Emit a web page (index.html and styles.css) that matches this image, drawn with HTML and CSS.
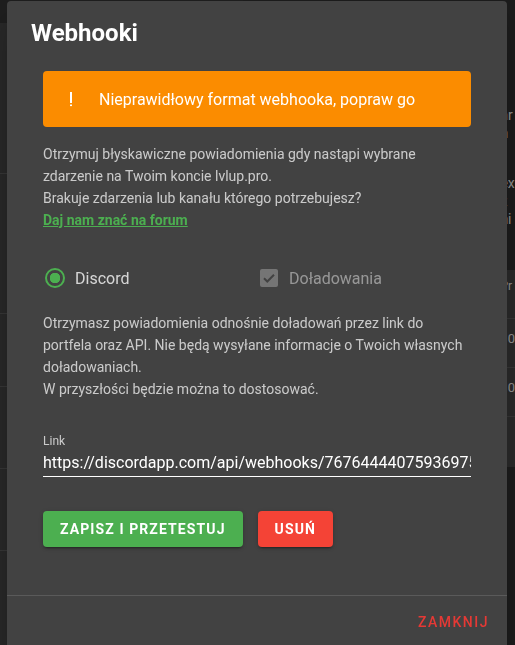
FILE: index.html
```html
<!DOCTYPE html>
<html>
  <head>
    <meta charset="utf-8" />
    <title>Webhooki</title>
    <link rel="stylesheet" href="styles.css">
  </head>

  <body>
    <!-- page behind the dialog -->
    <div class="page">
      <div class="page-side">
        <div class="side-top"></div>
        <div class="side-row side-row--a"></div>
        <div class="side-row side-row--b"></div>
        <div class="side-row side-row--c"></div>
        <div class="side-row side-row--d"></div>
        <div class="side-row side-row--e"></div>
      </div>
      <div class="page-main">
        <div class="main-text">
          <p class="frag frag--first">ar</p>
          <p class="frag">n</p>
          <p class="frag frag--gap">ex</p>
          <p class="frag">z</p>
          <p class="frag">ni</p>
        </div>
        <div class="main-table">
          <div class="main-table__head">Pr</div>
          <div class="main-table__row">10</div>
          <div class="main-table__row">10</div>
        </div>
      </div>
    </div>

    <div class="overlay"></div>

    <div class="dialog">
      <h2 class="dialog-title">Webhooki</h2>

      <div class="dialog-body">
        <div class="alert">
          <svg class="alert-icon" width="24" height="24" viewBox="0 0 24 24">
            <rect x="11" y="5" width="2" height="11" fill="#fff" />
            <rect x="11" y="17.5" width="2" height="1.6" fill="#fff" />
          </svg>
          <span>Nieprawidłowy format webhooka, popraw go</span>
        </div>

        <p class="text">
          Otrzymuj błyskawiczne powiadomienia gdy nastąpi wybrane zdarzenie na
          Twoim koncie lvlup.pro.<br />
          Brakuje zdarzenia lub kanału którego potrzebujesz?<br />
          <a class="forum-link" href="#">Daj nam znać na forum</a>
        </p>

        <div class="choices">
          <label class="choice">
            <span class="radio"><span class="radio-dot"></span></span>
            <span class="choice-label">Discord</span>
          </label>
          <label class="choice choice--disabled">
            <span class="checkbox">
              <svg width="18" height="18" viewBox="0 0 18 18">
                <path d="M4 9.2l3.3 3.3L14 5.8" fill="none" stroke="#424242" stroke-width="2" />
              </svg>
            </span>
            <span class="choice-label">Doładowania</span>
          </label>
        </div>

        <p class="text text--info">
          Otrzymasz powiadomienia odnośnie doładowań przez link do portfela oraz
          API. Nie będą wysyłane informacje o Twoich własnych doładowaniach.<br />
          W przyszłości będzie można to dostosować.
        </p>

        <div class="field">
          <label class="field-label" for="link">Link</label>
          <input
            id="link"
            class="field-input"
            value="https://discordapp.com/api/webhooks/767644440759369759/abc"
            autocomplete="off"
          />
        </div>

        <div class="buttons">
          <button class="btn btn--green">Zapisz i przetestuj</button>
          <button class="btn btn--red">Usuń</button>
        </div>
      </div>

      <div class="dialog-actions">
        <button class="btn-text">Zamknij</button>
      </div>
    </div>
  </body>
</html>
```

FILE: styles.css
```css
html {
  font-family: Roboto, "Liberation Sans", Arial, sans-serif;
}

body {
  margin: 0;
  background: #1e1e1e;
  height: 645px;
  overflow: hidden;
}

/* page behind */
.page {
  display: flex;
  height: 645px;
}
.page-side {
  width: 250px;
  background: #2b2b2b;
}
.side-top {
  height: 23px;
  background: #202020;
}
.side-row {
  border-bottom: 1px solid #3a3a3a;
}
.side-row--a { height: 150px; }
.side-row--b { height: 139px; }
.side-row--c { height: 72px; }
.side-row--d { height: 81px; }
.side-row--e { height: 81px; }

.page-main {
  flex: 1;
  background: #1e1e1e;
  color: #9a9a9a;
  font-size: 14px;
  padding-left: 257px;
}
.main-text {
  height: 270px;
}
.frag {
  margin: 0;
  line-height: 18px;
}
.frag--first {
  padding-top: 106px;
}
.frag--gap {
  margin-top: 32px;
}
.main-table {
  background: #2d2d2d;
  height: 197px;
  font-size: 13px;
}
.main-table__head {
  height: 48px;
  line-height: 32px;
  font-size: 12px;
  border-bottom: 1px solid #3a3a3a;
}
.main-table__row {
  height: 48px;
  line-height: 40px;
  border-bottom: 1px solid #3a3a3a;
}

.overlay {
  position: fixed;
  inset: 0;
  background: rgba(0, 0, 0, 0.08);
}

/* dialog */
.dialog {
  position: fixed;
  top: 1px;
  left: 7px;
  width: 500px;
  background: #424242;
  border-radius: 4px 4px 0 0;
  box-shadow: 0 11px 15px -7px rgba(0, 0, 0, 0.2), 0 24px 38px 3px rgba(0, 0, 0, 0.14);
}

.dialog-title {
  margin: 0;
  padding: 16px 24px 0;
  font-size: 24px;
  line-height: 32px;
  font-weight: 700;
  color: #fff;
}

.dialog-body {
  padding: 22px 36px 48px;
}

.alert {
  display: flex;
  align-items: center;
  height: 56px;
  box-sizing: border-box;
  padding: 0 16px;
  background: #fb8c00;
  border-radius: 4px;
  color: #fff;
  font-size: 16px;
}
.alert-icon {
  margin-right: 16px;
  flex: none;
}

.text {
  margin: 16px 0 0;
  font-size: 14px;
  line-height: 22px;
  color: rgba(255, 255, 255, 0.72);
}
.text--info {
  margin-top: 22px;
}

.forum-link {
  color: #4caf50;
  font-weight: 700;
  text-decoration: underline;
}

.choices {
  display: grid;
  grid-template-columns: 1fr 1fr;
  margin-top: 35px;
}
.choice {
  display: flex;
  align-items: center;
  gap: 8px;
  height: 24px;
  font-size: 16px;
  color: rgba(255, 255, 255, 0.78);
}
.choice--disabled {
  color: rgba(255, 255, 255, 0.45);
}

.radio {
  width: 24px;
  height: 24px;
  display: flex;
  align-items: center;
  justify-content: center;
}
.radio-dot {
  width: 16px;
  height: 16px;
  border: 2px solid #4caf50;
  border-radius: 50%;
  box-sizing: content-box;
  background: radial-gradient(circle, #4caf50 0 5px, transparent 5.5px);
}

.checkbox {
  width: 24px;
  height: 24px;
  display: flex;
  align-items: center;
  justify-content: center;
}
.checkbox svg {
  background: #757575;
  border-radius: 2px;
}

.field {
  margin-top: 33px;
}
.field-label {
  display: block;
  font-size: 12px;
  line-height: 16px;
  color: rgba(255, 255, 255, 0.72);
}
.field-input {
  display: block;
  width: 100%;
  box-sizing: border-box;
  height: 28px;
  padding: 0 0 1px;
  margin: 0;
  border: 0;
  border-bottom: 1px solid #fff;
  background: transparent;
  color: #fff;
  font: inherit;
  font-size: 16px;
  outline: none;
}

.buttons {
  display: flex;
  gap: 15px;
  margin-top: 34px;
}
.btn {
  height: 36px;
  padding: 0 17px;
  border: 0;
  border-radius: 4px;
  color: #fff;
  font: inherit;
  font-size: 14px;
  font-weight: 700;
  letter-spacing: 1.1px;
  text-transform: uppercase;
  box-shadow: 0 3px 1px -2px rgba(0, 0, 0, 0.2), 0 2px 2px 0 rgba(0, 0, 0, 0.14), 0 1px 5px 0 rgba(0, 0, 0, 0.12);
}
.btn--green {
  background: #4caf50;
}
.btn--red {
  background: #f44336;
}

.dialog-actions {
  display: flex;
  justify-content: flex-end;
  padding: 8px 18px 8px;
  border-top: 1px solid #5a5a5a;
}
.btn-text {
  height: 36px;
  padding: 0;
  border: 0;
  background: transparent;
  color: #e53935;
  font: inherit;
  font-size: 14px;
  font-weight: 500;
  letter-spacing: 1.5px;
  text-transform: uppercase;
}
```
